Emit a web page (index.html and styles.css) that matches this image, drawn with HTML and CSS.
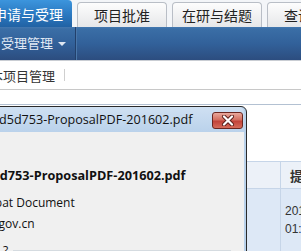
FILE: index.html
```html
<!DOCTYPE html>
<html lang="zh-CN">
<head>
    <meta charset="UTF-8">
    <title>项目受理</title>
    <link rel="stylesheet" href="styles.css">
</head>
<body>

    <div class="tabs">
        <div class="tab active">申请与受理</div>
        <div class="tab">项目批准</div>
        <div class="tab">在研与结题</div>
        <div class="tab">查询统计</div>
    </div>

    <div class="menubar">
        <div class="menu">受理管理 <span class="caret"></span></div>
    </div>

    <div class="subbar">
        <span class="sub">本项目管理</span>
        <span class="sep"></span>
    </div>

    <div class="toolbar"></div>

    <div class="grid-area">
        <table class="grid">
            <tr>
                <th class="col-a">序号</th>
                <th class="col-b">提交时间</th>
            </tr>
            <tr class="row-sel">
                <td class="col-a"></td>
                <td class="col-b">2016-02-18<br>01:25:36</td>
            </tr>
        </table>
    </div>

    <!-- download dialog over the page -->
    <div class="dialog">
        <div class="dlg-title">
            <span class="dlg-caption">d5d753-ProposalPDF-201602.pdf</span>
            <span class="dlg-close">
                <svg width="16" height="11" viewBox="0 0 16 11">
                    <path d="M4 1.5 L12 9.5 M12 1.5 L4 9.5" stroke="#5a1f1a" stroke-width="4" stroke-linecap="round"/>
                    <path d="M4 1.5 L12 9.5 M12 1.5 L4 9.5" stroke="#fff" stroke-width="2.2" stroke-linecap="round"/>
                </svg>
            </span>
        </div>
        <div class="dlg-body">
            <div class="dlg-name">75d5d753-ProposalPDF-201602.pdf</div>
            <div class="dlg-line">Adobe Acrobat Document</div>
            <div class="dlg-line dlg-from">www.most.gov.cn</div>
            <div class="dlg-group">
                <span class="dlg-q">?</span>
                <span class="dlg-rule"></span>
            </div>
        </div>
    </div>

</body>
</html>
```

FILE: styles.css
```css
body {
    margin: 0;
    font-family: "Noto Sans CJK SC", "Liberation Sans", sans-serif;
    background-color: #fff;
    overflow: hidden;
    position: relative;
    height: 251px;
}

/* top tabs */
.tabs {
    display: flex;
    align-items: flex-end;
    height: 27px;
    margin-left: -16px;
    background-color: #f3f5f8;
}

.tab {
    height: 25px;
    box-sizing: border-box;
    width: 90px;
    margin-right: 5px;
    flex-shrink: 0;
    text-align: center;
    font-size: 14px;
    line-height: 24px;
    color: #222;
    border: 1px solid #b9bec6;
    border-bottom: none;
    border-radius: 4px 4px 0 0;
    background: linear-gradient(#fdfdfd, #e6e7e9);
}

.tab.active {
    width: 88px;
    height: 27px;
    line-height: 28px;
    color: #fff;
    border: none;
    background: linear-gradient(#3c95dd, #2a78c0 55%, #2162a4);
}

/* blue menu bar */
.menubar {
    height: 33px;
    display: flex;
    background: linear-gradient(#4378b0 0, #3a6ea6 2px, #32619a 50%, #2c4d7f);
    border-bottom: 1px solid #c9cdd3;
}

.menu {
    width: 74px;
    padding-left: 1px;
    font-size: 13px;
    line-height: 32px;
    color: #e2eaf5;
    border-right: 1px solid #22406b;
    box-shadow: 1px 0 0 #4a77aa;
}

.caret {
    display: inline-block;
    margin-left: 2px;
    vertical-align: middle;
    border-left: 4px solid transparent;
    border-right: 4px solid transparent;
    border-top: 4px solid #dfe7f2;
}

/* second level menu */
.subbar {
    height: 28px;
    display: flex;
    align-items: center;
    border-bottom: 1px solid #c8c8c8;
}

.sub {
    margin-left: -10px;
    font-size: 13px;
    color: #333;
}

.sep {
    width: 1px;
    height: 12px;
    margin-left: 9px;
    background-color: #cfcfcf;
}

.toolbar {
    height: 14px;
    border-bottom: 1px solid #b3c1d2;
}

/* list table */
.grid-area {
    padding-top: 56px;
    padding-left: 150px;
}

.grid {
    border-collapse: collapse;
    table-layout: fixed;
    width: 260px;
    font-family: "Liberation Sans", Arial, sans-serif;
    font-size: 12px;
    color: #333;
}

.grid th {
    height: 26px;
    background-color: #ecf1f8;
    border: 1px solid #c6d5e8;
    font-family: "Noto Sans CJK SC", sans-serif;
    font-size: 13px;
    text-align: left;
    padding: 0 0 0 9px;
    white-space: nowrap;
}

.grid td {
    border-left: 1px solid #c6d5e8;
    border-right: 1px solid #c6d5e8;
    padding: 13px 0 20px 4px;
    line-height: 18px;
    vertical-align: top;
}

.col-a {
    width: 120px;
}

.col-b {
    width: 122px;
}

.row-sel td {
    background-color: #dde8f6;
}

/* dialog */
.dialog {
    position: absolute;
    top: 106px;
    left: -62px;
    width: 309px;
    height: 160px;
    box-sizing: border-box;
    border: 1px solid #2a2a2a;
    border-radius: 0 6px 0 0;
    background-color: #b9d1ea;
    padding: 0 2px 0 0;
}

.dlg-title {
    height: 25px;
    display: flex;
    align-items: center;
    justify-content: space-between;
    border-radius: 0 5px 0 0;
    background: linear-gradient(#cfe0f2, #bad2eb);
}

.dlg-caption {
    padding-left: 60px;
    font-family: "Open Sans", sans-serif;
    font-size: 12.6px;
    color: #111;
}

.dlg-close {
    width: 29px;
    height: 15px;
    margin-right: 1px;
    margin-top: 1px;
    display: flex;
    align-items: center;
    justify-content: center;
    border: 1px solid #6b2620;
    border-radius: 3px;
    background: linear-gradient(#e9a89c, #d36f60 45%, #c2433a 55%, #d56b5a);
}

.dlg-body {
    background-color: #f0f0f0;
    height: 140px;
    padding-top: 34px;
    font-family: "Open Sans", sans-serif;
    font-size: 12px;
    color: #111;
}

.dlg-name {
    padding-left: 31px;
    font-size: 12.7px;
    font-weight: bold;
    margin-bottom: 8px;
}

.dlg-line {
    margin-left: -9px;
    line-height: 21px;
}

.dlg-from {
    margin-left: -3px;
}

.dlg-group {
    display: flex;
    align-items: center;
    margin-top: 8px;
    padding-left: 64px;
}

.dlg-q {
    margin-right: 5px;
}

.dlg-rule {
    width: 218px;
    height: 1px;
    border-bottom: 1px solid #fff;
    background-color: #d5dbe0;
}
```
